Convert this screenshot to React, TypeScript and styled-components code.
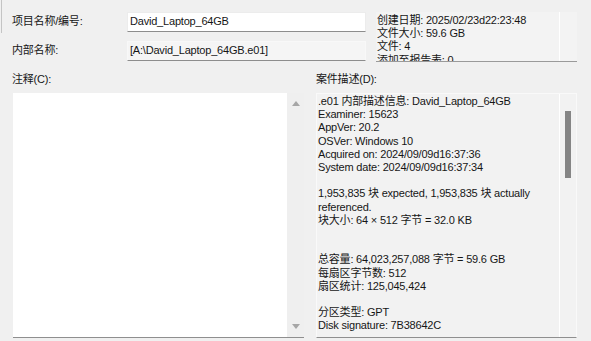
import React from "react";
import styled, { createGlobalStyle } from "styled-components";

const GlobalStyle = createGlobalStyle`
  html, body {
    margin: 0;
    padding: 0;
    background: #f0f0f0;
  }
  body {
    font-family: "Liberation Sans", "Noto Sans CJK SC", sans-serif;
    font-size: 11px;
    letter-spacing: -0.2px;
    color: #161616;
  }
`;

const Page = styled.div`
  position: relative;
  width: 591px;
  height: 341px;
  box-sizing: border-box;
  padding: 12px 14px 0 12px;
  background: #f0f0f0;
  overflow: hidden;
  display: flex;
  flex-direction: column;

  &::before {
    content: "";
    position: absolute;
    left: 1px;
    top: 0;
    width: 1px;
    height: 33px;
    background: #c4c4c4;
  }
`;

const Top = styled.div`
  display: flex;
  height: 50px;
`;

const Form = styled.div`
  display: grid;
  grid-template-columns: 115px 239px;
  grid-template-rows: 20px 20px;
  row-gap: 9px;
  align-items: center;
`;

const Label = styled.span`
  line-height: 13.2px;
  white-space: nowrap;
`;

const Field = styled.div<{ $readOnly?: boolean }>`
  height: 20px;
  box-sizing: border-box;
  background: ${(p) => (p.$readOnly ? "#f5f5f5" : "#ffffff")};
  border: 1px solid ${(p) => (p.$readOnly ? "#f8f8f8" : "#ececec")};
  border-bottom-color: #8d8d8d;
  padding: 0 2px;
  display: flex;
  align-items: center;
  line-height: 13.2px;
  white-space: nowrap;
  overflow: hidden;
`;

const InfoBox = styled.div`
  margin-left: 10px;
  width: 201px;
  height: 50px;
  box-sizing: border-box;
  display: flex;
  background: #f3f3f3;
  border-bottom: 1px solid #9a9a9a;
  overflow: hidden;
`;

const InfoText = styled.div`
  flex: 1;
  padding: 2px 0 0 1px;
  line-height: 13.2px;
  white-space: pre;
  overflow: hidden;
`;

const InfoTrack = styled.div`
  width: 17px;
  border-left: 1px solid #ffffff;
`;

const Bottom = styled.div`
  margin-top: 11px;
  display: grid;
  grid-template-columns: 292px 261px;
  grid-template-rows: 13px 245px;
  column-gap: 12px;
  row-gap: 7px;
`;

const SectionLabel = styled.span`
  line-height: 13.2px;
  white-space: nowrap;
`;

const Memo = styled.div`
  margin-left: 1px;
  display: flex;
  border-bottom: 1px solid #8f8f8f;
`;

const MemoArea = styled.div`
  flex: 1;
  background: #ffffff;
`;

const MemoTrack = styled.div`
  width: 17px;
  background: #efefef;
  display: flex;
  flex-direction: column;
  justify-content: space-between;
  align-items: center;
  padding: 8px 0 8px;
`;

const Desc = styled.div`
  display: flex;
  background: #f2f2f2;
  border: 1px solid #f9f9f9;
  border-bottom-color: #8f8f8f;
  overflow: hidden;
`;

const DescText = styled.div`
  flex: 1;
  padding: 1px 1px;
  line-height: 13.2px;
  white-space: pre-wrap;
  overflow: hidden;
`;

const DescTrack = styled.div`
  width: 16px;
  border-left: 1px solid #ffffff;
  display: flex;
  justify-content: center;
  align-items: flex-start;
`;

const Thumb = styled.div`
  margin-top: 17px;
  width: 6px;
  height: 67px;
  background: #858585;
`;

const Arrow = ({ down }: { down?: boolean }) => (
  <svg width="8" height="5" viewBox="0 0 8 5">
    <polygon points={down ? "0,0 8,0 4,5" : "0,5 8,5 4,0"} fill="#a6a6a6" />
  </svg>
);

const infoLines = [
  "创建日期: 2025/02/23d22:23:48",
  "文件大小: 59.6 GB",
  "文件: 4",
  "添加至报告表: 0",
];

const descLines = [
  ".e01 内部描述信息: David_Laptop_64GB",
  "Examiner: 15623",
  "AppVer: 20.2",
  "OSVer: Windows 10",
  "Acquired on: 2024/09/09d16:37:36",
  "System date: 2024/09/09d16:37:34",
  "",
  "1,953,835 块 expected, 1,953,835 块 actually referenced.",
  "块大小: 64 × 512 字节 = 32.0 KB",
  "",
  "",
  "总容量: 64,023,257,088 字节 = 59.6 GB",
  "每扇区字节数: 512",
  "扇区统计: 125,045,424",
  "",
  "分区类型: GPT",
  "Disk signature: 7B38642C",
];

export default function App() {
  return (
    <>
      <GlobalStyle />
      <Page>
        <Top>
          <Form>
            <Label>项目名称/编号:</Label>
            <Field>David_Laptop_64GB</Field>
            <Label>内部名称:</Label>
            <Field $readOnly>[A:\David_Laptop_64GB.e01]</Field>
          </Form>
          <InfoBox>
            <InfoText>{infoLines.join("\n")}</InfoText>
            <InfoTrack />
          </InfoBox>
        </Top>
        <Bottom>
          <SectionLabel>注释(C):</SectionLabel>
          <SectionLabel>案件描述(D):</SectionLabel>
          <Memo>
            <MemoArea />
            <MemoTrack>
              <Arrow />
              <Arrow down />
            </MemoTrack>
          </Memo>
          <Desc>
            <DescText>{descLines.join("\n")}</DescText>
            <DescTrack>
              <Thumb />
            </DescTrack>
          </Desc>
        </Bottom>
      </Page>
    </>
  );
}
